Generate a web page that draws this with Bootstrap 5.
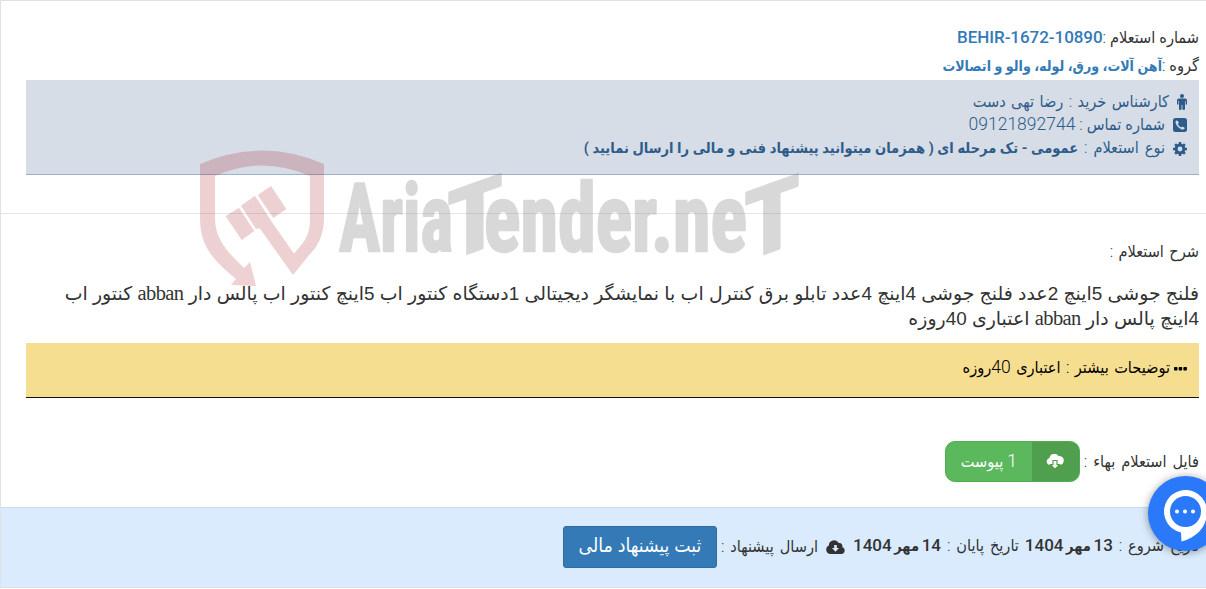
<!DOCTYPE html>
<html lang="fa" dir="rtl">

<head>
  <meta charset="utf-8">
  <meta name="viewport" content="width=device-width, initial-scale=1">
  <title>AriaTender.neT</title>
  <link href="https://cdn.jsdelivr.net/npm/bootstrap@5.3.0/dist/css/bootstrap.min.css" rel="stylesheet">
  <style>
    body {
      font-family: Roboto, "DejaVu Sans Condensed", "DejaVu Sans", sans-serif;
      font-size: 16.2px;
      font-weight: 300;
      line-height: 24px;
      color: #333;
      overflow: hidden;
    }

    b, .fw-bold { font-size: 14.5px; font-weight: 700; }
    .tender { height: 588px; border-left: 1px solid #dee2e6; border-top: 1px solid #dee2e6; }
    .tender-head { height: 213px; padding: 23px 7px 0 25px; border-bottom: 1px solid #e5e5e5; }
    .tender-head a { color: #337ab7; text-decoration: none; }
    .head-row { height: 27.5px; line-height: 27px; white-space: nowrap; }
    .head-row .fw-bold { font-size: 14.1px; }
    .code { font-size: 17px; font-weight: 500; letter-spacing: -.05px; }
    .buyer { height: 95px; margin-top: 1px; padding: 10px 12px 0; background: #d6dde7; border-bottom: 1px solid #9ab1c8; color: #2e5c8a; }
    .buyer-row { height: 23.5px; white-space: nowrap; }
    .num { font-size: 17.5px; line-height: 1; }
    .spaced { word-spacing: 1.5px; }
    .spaced-2 { word-spacing: 2px; }
    .tender-body { height: 293px; padding: 26px 7px 0 25px; }
    .subject { font-family: "Liberation Sans", "DejaVu Sans", sans-serif; font-size: 18.9px; line-height: 25px; font-weight: 400; margin: 17px 0 12px; }
    .subject .abban { font-family: "Liberation Serif", serif; font-size: 20.5px; letter-spacing: -.6px; }
    .more-info { height: 55px; padding: 13px 12px 0; background: #f6de91; border-bottom: 1px solid #111; color: #000; }
    .file-row { margin-top: 43px; }
    .attach { width: 135px; height: 41px; border: 1px solid #4cae4c; border-radius: 10px; background: #5cb85c; color: #fff; overflow: hidden; }
    .attach-icon { width: 47px; background: #4f9f4f; }
    .tender-foot { height: 81px; padding: 0 7px 2px; background: #d9ebfd; border-top: 1px solid #c9dbec; border-bottom: 1px solid #dee2e6; white-space: nowrap; }
    .tender-foot b { word-spacing: -1px; }
    .tender-foot b .num { font-size: 17px; font-weight: 500; letter-spacing: -.5px; }
    .btn-offer { width: 154px; height: 42px; padding: 0; background: #337ab7; border: 1px solid #2e6da4; border-radius: 3px; color: #fff; font-size: 19.3px; }
    .watermark { left: 190px; top: 140px; pointer-events: none; overflow: visible; }
    .chat { left: 1148px; top: 476px; width: 75px; height: 75px; border-radius: 50%; background: #2b79fb; box-shadow: 0 1px 8px rgba(0, 0, 0, .4); }
  </style>
</head>

<body>
  <main class="tender">
    <section class="tender-head">
      <div class="head-row"><span>شماره استعلام :</span><a href="#" class="code">BEHIR-1672-10890</a></div>
      <div class="head-row"><span>گروه :</span><a href="#" class="fw-bold">آهن آلات، ورق، لوله، والو و اتصالات</a></div>
      <div class="buyer">
        <div class="buyer-row d-flex align-items-center">
          <svg class="ms-2" width="10" height="16" viewBox="0 0 10 16" fill="currentColor"><circle cx="5" cy="2" r="2" /><path d="M2 4.500h6q2 0 2 2V10q0 .8-.7.800T8.600 10V7H8v8q0 1-1.200 1T5.400 15v-4h-.8v4q0 1-1.400 1T2 15V7h-.6v3q0 .8-.7.800T0 10V6.500q0-2 2-2z" /></svg>
          <span class="spaced">کارشناس خرید : رضا تهی دست</span>
        </div>
        <div class="buyer-row d-flex align-items-center">
          <svg class="ms-2" width="14" height="14" viewBox="0 0 14 14"><rect width="14" height="14" rx="2.500" fill="currentColor" /><path d="M4 2.200 2.500 3.400c-.5 3 4.600 8.500 8 8.200L12 10 9.300 8.400 8.200 9.500Q5.600 8.300 4.800 6L6 4.800z" fill="#d6dde7" /></svg>
          <span>شماره تماس : <span class="num">09121892744</span></span>
        </div>
        <div class="buyer-row d-flex align-items-center">
          <svg class="ms-2" width="14" height="14" viewBox="0 0 14 14"><circle cx="7" cy="7" r="3.900" fill="none" stroke="currentColor" stroke-width="3" /><path d="M7 0v3M7 11v3M0 7h3M11 7h3M2.100 2.100l2 2M9.900 9.900l2 2M2.100 11.900l2-2M9.900 4.100l2-2" stroke="currentColor" stroke-width="2.600" /></svg>
          <span><span class="spaced-2">نوع استعلام : </span><b>عمومی - تک مرحله ای ( همزمان میتوانید پیشنهاد فنی و مالی را ارسال نمایید )</b></span>
        </div>
      </div>
    </section>

    <section class="tender-body">
      <div><span class="spaced">شرح استعلام :</span></div>
      <h1 class="subject">فلنج جوشی 5اینچ 2عدد فلنج جوشی 4اینچ 4عدد تابلو برق کنترل اب با نمایشگر دیجیتالی 1دستگاه کنتور اب 5اینچ کنتور اب پالس دار <span class="abban">abban</span> کنتور اب<br>4اینچ پالس دار <span class="abban">abban</span> اعتباری 40روزه</h1>
      <div class="more-info">
        <svg width="13" height="4" viewBox="0 0 13 4" class="align-middle"><rect width="3.500" height="3.500" rx=".7" /><rect x="4.700" width="3.500" height="3.500" rx=".7" /><rect x="9.400" width="3.500" height="3.500" rx=".7" /></svg>
        <span class="spaced">توضیحات بیشتر : اعتباری <span class="num">40</span>روزه</span>
      </div>
      <div class="file-row d-flex align-items-center">
        <span class="ms-1 spaced-2">فایل استعلام بهاء :</span>
        <a href="#" class="attach d-flex text-decoration-none">
          <span class="attach-icon d-flex align-items-center justify-content-center"><svg width="18" height="16" viewBox="0 0 18 16"><path d="M4 11a3.500 3.500 0 0 1-.6-6.900A5 5 0 0 1 12.500 2 4.500 4.500 0 0 1 14 11z" fill="#fff" /><path d="M7 6.500h4v4h2.500L9 15.500 4.500 10.500H7z" fill="#fff" stroke="#4f9f4f" stroke-width="1.200" /></svg></span>
          <span class="flex-fill d-flex align-items-center justify-content-center"><span><span class="num">1</span> پیوست</span></span>
        </a>
      </div>
    </section>

    <section class="tender-foot d-flex align-items-center">
      <span class="spaced-2">تاریخ شروع : <b><span class="num">13</span> مهر <span class="num">1404</span></b> تاریخ پایان : <b><span class="num">14</span> مهر <span class="num">1404</span></b></span>
      <svg class="mx-2" width="19" height="14" viewBox="0 0 19 14"><path d="M4.500 14a4.400 4.400 0 0 1-1.700-8.400A5.300 5.300 0 0 1 12.700 3a3 3 0 0 1 3.500 4A3.600 3.600 0 0 1 15.500 14z" fill="#333" /><path d="M8.200 5h2.600v3H13l-3.500 3.700L6 8h2.200z" fill="#d9ebfd" /></svg>
      <span class="spaced-2">ارسال پیشنهاد :</span>
      <button class="btn btn-offer me-1">ثبت پیشنهاد مالی</button>
    </section>
  </main>

  <svg class="watermark position-absolute" width="620" height="160" viewBox="190 140 620 160" direction="ltr">
    <g fill="#a81822" opacity=".2">
      <path d="M200 164Q262 137 324 164V218Q324 240 310 254L293 275 259.700 228.300 256 229 241 205.700 255 195.700 271.700 221.700 294 253.700C305 241 310 236 310 218V176Q262 155 215 176V218C215 244 235 258 244 268L250 262 256 286 231 285 236 279C213 260 200 246 200 218z" />
      <path d="M257.700 195 271 186 286.300 209 273.300 218z" />
      <path d="M225.700 216.300 239 207.700 254.300 231 241.700 240z" />
    </g>
    <g fill="#808080" stroke="#808080" stroke-width="2.500" stroke-linejoin="round" opacity=".3" font-family="Roboto" font-weight="700" font-stretch="condensed" font-size="95">
      <text x="339" y="251" textLength="114" lengthAdjust="spacingAndGlyphs">Aria</text>
      <text x="447" y="251" textLength="56" lengthAdjust="spacingAndGlyphs" transform="translate(0 171) skewY(-19.800)">T</text>
      <text x="484" y="251" textLength="263" lengthAdjust="spacingAndGlyphs">ender.ne</text>
      <text x="744" y="251" textLength="56" lengthAdjust="spacingAndGlyphs" transform="translate(0 278) skewY(-19.800)">T</text>
    </g>
  </svg>

  <div class="chat position-absolute">
    <svg width="75" height="75" viewBox="0 0 75 75"><path d="M33 56.500A21.500 21.500 0 1 1 59 36C59 52 47 62 33.500 65.500z" fill="#fff" /><circle cx="37.500" cy="35.500" r="15.500" fill="#2b79fb" /><path d="M29 35.500h.01M37 35.500h.01M45 35.500h.01" stroke="#fff" stroke-width="4" stroke-linecap="round" /></svg>
  </div>

  <script src="https://cdn.jsdelivr.net/npm/bootstrap@5.3.0/dist/js/bootstrap.bundle.min.js"></script>
</body>

</html>
